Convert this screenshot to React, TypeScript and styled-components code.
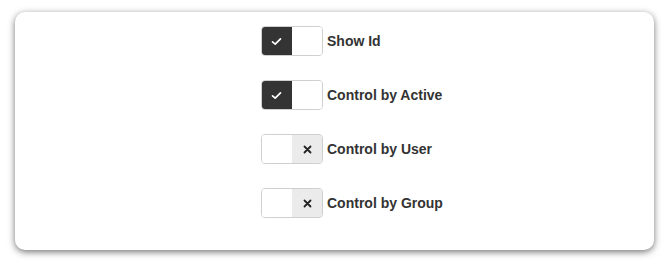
import React from "react";
import styled, { createGlobalStyle } from "styled-components";

const Global = createGlobalStyle`
  html, body { margin: 0; padding: 0; background: #ffffff; }
  body { font-family: "Liberation Sans", Arial, Helvetica, sans-serif; }
`;

const Page = styled.div`
  padding: 12px 15px 14px 15px;
  box-sizing: border-box;
  width: 669px;
  height: 264px;
`;

const Card = styled.div`
  background: #fff;
  border-radius: 10px;
  box-shadow: 0 2px 7px rgba(0, 0, 0, 0.55);
  height: 238px;
  box-sizing: border-box;
  padding: 14px 0 0 246px;
  display: flex;
  flex-direction: column;
  gap: 24px;
`;

const Row = styled.label`
  display: flex;
  align-items: center;
  gap: 4px;
  height: 30px;
`;

const Toggle = styled.div`
  display: flex;
  width: 62px;
  height: 30px;
  box-sizing: border-box;
  border: 1px solid #cfcfcf;
  border-radius: 4px;
  overflow: hidden;
`;

const Half = styled.div<{ $tone: "dark" | "white" | "grey" }>`
  flex: 1;
  display: flex;
  align-items: center;
  justify-content: center;
  background: ${(p) =>
    p.$tone === "dark" ? "#343434" : p.$tone === "grey" ? "#ebebeb" : "#ffffff"};
  ${(p) => (p.$tone === "dark" ? "margin: -1px 0 -1px -1px;" : "")}
`;

const Label = styled.span`
  font-size: 14px;
  font-weight: bold;
  color: #333;
`;

const Check = () => (
  <svg width="11" height="9" viewBox="0 0 11 9">
    <path d="M1.5 4.8 L4.2 7.2 L9.5 1.8" fill="none" stroke="#fff" strokeWidth="1.7" strokeLinecap="round" strokeLinejoin="round" />
  </svg>
);

const Cross = () => (
  <svg width="9" height="9" viewBox="0 0 9 9">
    <path d="M1.5 1.5 L7.5 7.5 M7.5 1.5 L1.5 7.5" fill="none" stroke="#222" strokeWidth="1.8" strokeLinecap="round" />
  </svg>
);

const items: { label: string; on: boolean }[] = [
  { label: "Show Id", on: true },
  { label: "Control by Active", on: true },
  { label: "Control by User", on: false },
  { label: "Control by Group", on: false },
];

export default function App() {
  return (
    <>
      <Global />
      <Page>
        <Card>
          {items.map((it) => (
            <Row key={it.label}>
              <Toggle>
                {it.on ? (
                  <>
                    <Half $tone="dark"><Check /></Half>
                    <Half $tone="white" />
                  </>
                ) : (
                  <>
                    <Half $tone="white" />
                    <Half $tone="grey"><Cross /></Half>
                  </>
                )}
              </Toggle>
              <Label>{it.label}</Label>
            </Row>
          ))}
        </Card>
      </Page>
    </>
  );
}
